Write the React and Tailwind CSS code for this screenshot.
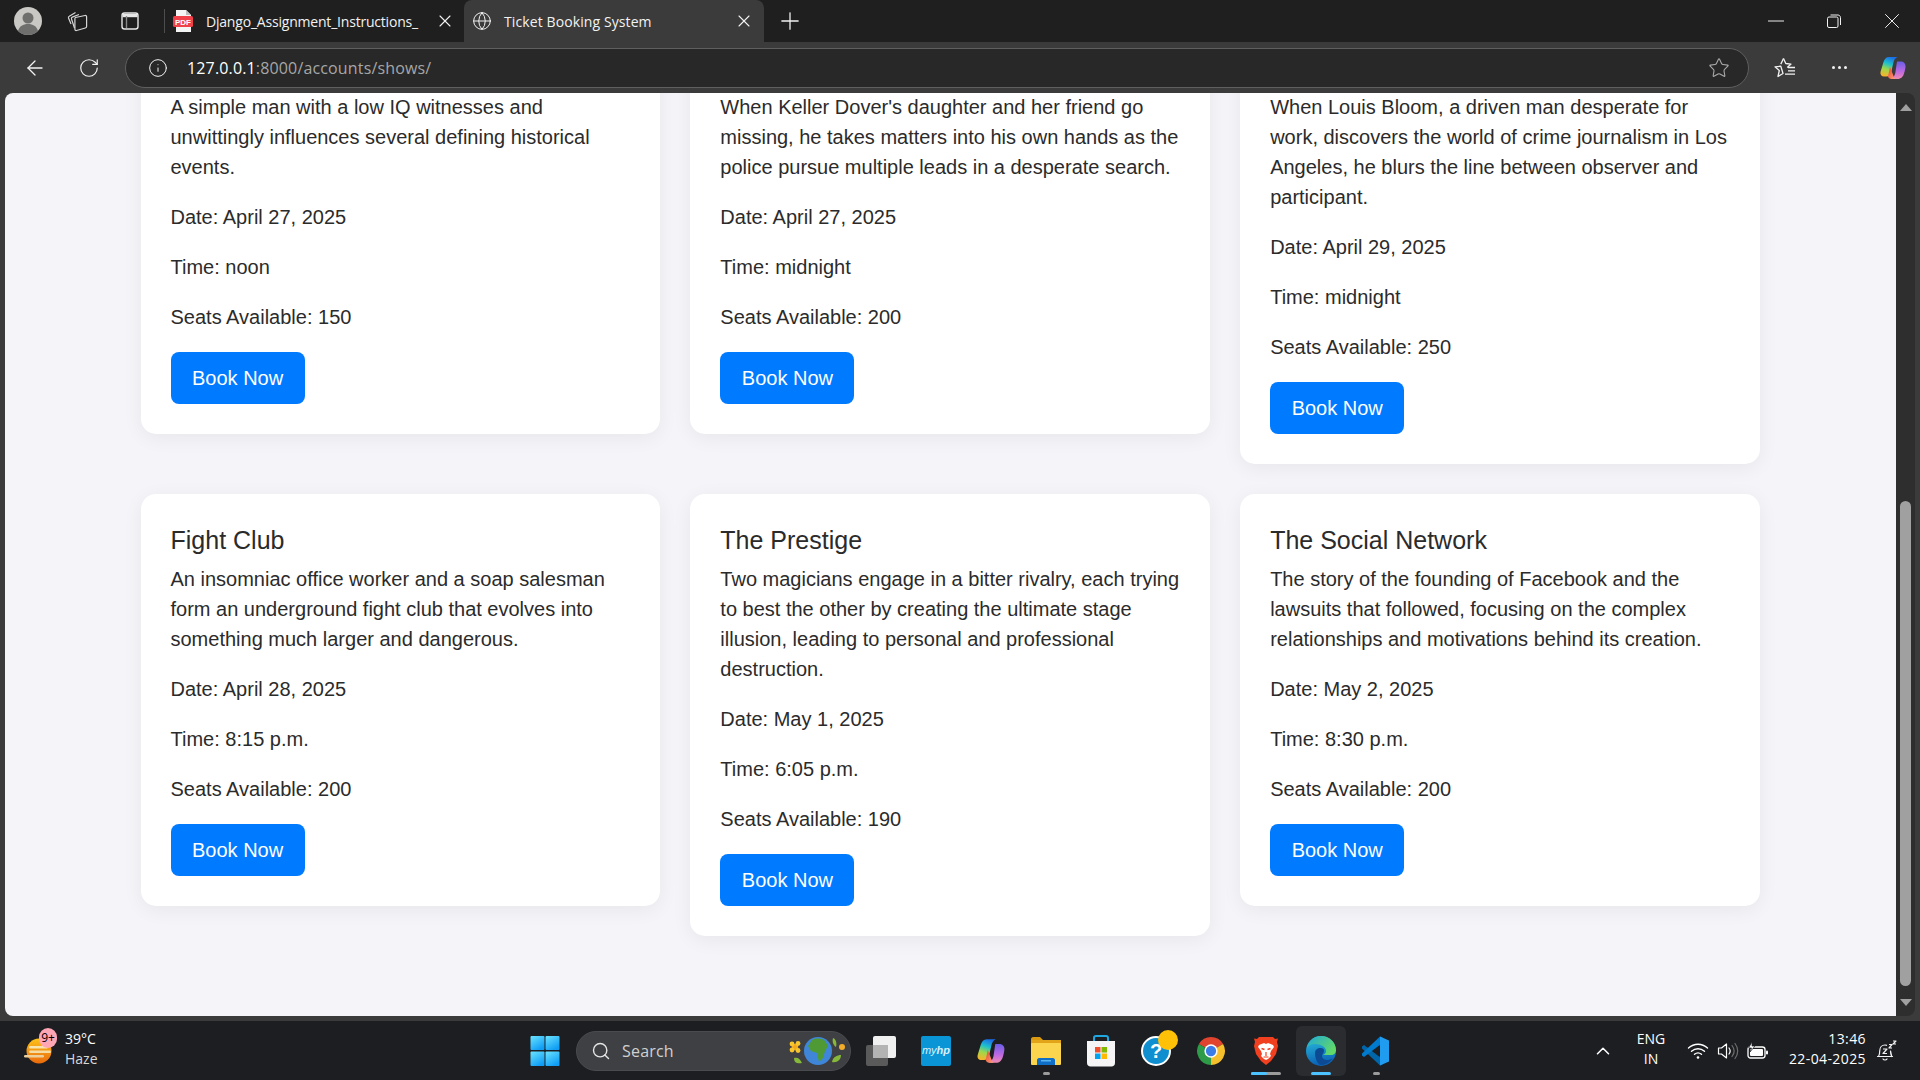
import { ArrowLeft, RotateCw, Info, Star, X, Plus, Minus, Globe, Search, ChevronUp } from 'lucide-react';

// the first row is scrolled so far that its titles are under the browser toolbar
const shows = [
  { id: 1, title: '', text: 'A simple man with a low IQ witnesses and unwittingly influences several defining historical events.', date: 'April 27, 2025', time: 'noon', seats: 150 },
  { id: 2, title: '', text: "When Keller Dover's daughter and her friend go missing, he takes matters into his own hands as the police pursue multiple leads in a desperate search.", date: 'April 27, 2025', time: 'midnight', seats: 200 },
  { id: 3, title: '', text: 'When Louis Bloom, a driven man desperate for work, discovers the world of crime journalism in Los Angeles, he blurs the line between observer and participant.', date: 'April 29, 2025', time: 'midnight', seats: 250 },
  { id: 4, title: 'Fight Club', text: 'An insomniac office worker and a soap salesman form an underground fight club that evolves into something much larger and dangerous.', date: 'April 28, 2025', time: '8:15 p.m.', seats: 200 },
  { id: 5, title: 'The Prestige', text: 'Two magicians engage in a bitter rivalry, each trying to best the other by creating the ultimate stage illusion, leading to personal and professional destruction.', date: 'May 1, 2025', time: '6:05 p.m.', seats: 190 },
  { id: 6, title: 'The Social Network', text: 'The story of the founding of Facebook and the lawsuits that followed, focusing on the complex relationships and motivations behind its creation.', date: 'May 2, 2025', time: '8:30 p.m.', seats: 200 },
];

function ShowCard({ show }) {
  return (
    <div className="self-start rounded-[15px] bg-white p-[30px] text-[20px] leading-[30px] text-[#2b2b2b] shadow-[0_4px_20px_rgba(0,0,0,0.06)]">
      <h3 className="mb-[7.5px] min-h-[32.5px] text-[25px] leading-[32.5px]">{show.title}</h3>
      <p className="mb-5">{show.text}</p>
      <p className="mb-5">Date: {show.date}</p>
      <p className="mb-5">Time: {show.time}</p>
      <p className="mb-5">Seats Available: {show.seats}</p>
      <button className="h-[52px] rounded-lg bg-[#007bff] px-[21.5px] text-white">Book Now</button>
    </div>
  );
}

function PdfIcon() {
  return (
    <svg width="20" height="24" viewBox="0 0 20 24">
      <path d="M3 1h10l5 5v17H3z" fill="#f4f4f4" />
      <path d="M13 1l5 5h-5z" fill="#bdbdbd" />
      <rect x="0" y="7" width="20" height="11" rx="1.500" fill="#f0404a" />
      <text x="10" y="15.500" textAnchor="middle" fontSize="8" fontWeight="700" fill="#fff" fontFamily="Liberation Sans, sans-serif">PDF</text>
    </svg>
  );
}

function CollectionsIcon() {
  return (
    <svg width="22" height="22" viewBox="0 0 22 22" fill="none" stroke="#d6d6d6" strokeWidth="1.200">
      <path d="M9.500 7.500 19 5.500c1-.2 1.600.4 1.600 1.300v9.700c0 .8-.4 1.300-1.200 1.500l-8.900 2.500c-1 .2-1.600-.3-1.600-1.200V8.700c0-.6.200-1 .6-1.200z" />
      <path d="M8.500 18 5.500 9c-.3-.9 0-1.600.8-1.900L13 4.500M5 14 2.500 8c-.3-.9 0-1.500.8-1.800L9.500 2.500" />
    </svg>
  );
}

function TabsIcon() {
  return (
    <svg width="20" height="20" viewBox="0 0 20 20" fill="none" stroke="#e6e6e6" strokeWidth="1.400">
      <rect x="2" y="2" width="16" height="16" rx="2.500" />
      <path d="M2.500 4.500h15" strokeWidth="3.400" />
      <path d="M6.500 5v12" stroke="#8a8a8a" />
    </svg>
  );
}

function Avatar() {
  return (
    <svg width="28" height="28" viewBox="0 0 28 28">
      <circle cx="14" cy="14" r="14" fill="#c9c8c4" />
      <circle cx="14" cy="11" r="5.500" fill="#6f6f6d" />
      <path d="M4 24c1.500-5 5-7 10-7s8.500 2 10 7c-2.500 2.600-6 4-10 4s-7.500-1.400-10-4z" fill="#6f6f6d" />
    </svg>
  );
}

function FavoritesIcon() {
  return (
    <svg width="22" height="22" viewBox="0 0 22 22" fill="none" stroke="#f2f2f2" strokeWidth="1.300" strokeLinejoin="round">
      <path d="M9.500 1.500 11.800 6.500l5.200.6-3.800 3.400M9 16.500 4 19.500l1.300-6L1 9.800l5.800-.6z" />
      <path d="M9.500 1.500 6.800 7.100M14 10.500H21M14 13.800h7M11 17.200h10" />
    </svg>
  );
}

function CopilotIcon({ size = 28, id = 'a' }) {
  return (
    <svg width={size} height={size} viewBox="0 0 28 28">
      <defs>
        <linearGradient id={`copA${id}`} x1="0.600" y1="0" x2="0.300" y2="1">
          <stop offset="0" stopColor="#1b6fe8" />
          <stop offset="0.350" stopColor="#1fc1cc" />
          <stop offset="0.650" stopColor="#9fd84a" />
          <stop offset="1" stopColor="#f7b32c" />
        </linearGradient>
        <linearGradient id={`copB${id}`} x1="0.500" y1="0" x2="0.500" y2="1">
          <stop offset="0" stopColor="#6a5ee8" />
          <stop offset="0.600" stopColor="#c16ae0" />
          <stop offset="1" stopColor="#f08ab0" />
        </linearGradient>
        <linearGradient id={`copC${id}`} x1="0" y1="0" x2="1" y2="1">
          <stop offset="0" stopColor="#f0422c" />
          <stop offset="1" stopColor="#f9a37c" />
        </linearGradient>
      </defs>
      <path d="M10 3h8.500c-2.500 1-3.500 3-4.200 6L12 19c-.6 2.500-2 3.500-4.500 3.500H5c-2.500 0-4-2-3.500-4.500L4.500 8C5.500 5 7 3 10 3z" fill={`url(#copA${id})`} />
      <path d="M18 7.500h4c2.500 0 4.500 2 4.500 4.500 0 2-.6 5-1.500 7.500-.8 3-3 5.500-6.500 5.500h-7c2.800-.6 4-3 4.800-6L18 7.500z" fill={`url(#copB${id})`} />
      <path d="M11 13l3.500 9c.3 1 1 2.300 2 3h-4c-2 0-3-1-3.500-2.500z" fill={`url(#copC${id})`} />
    </svg>
  );
}

function StartIcon() {
  return (
    <svg width="30" height="30" viewBox="0 0 30 30">
      <defs>
        <linearGradient id="win" x1="0" y1="0" x2="0.600" y2="1">
          <stop offset="0" stopColor="#6ce4ff" />
          <stop offset="1" stopColor="#0f9df5" />
        </linearGradient>
      </defs>
      <rect x="0.500" y="0" width="14" height="14" rx="1" fill="url(#win)" />
      <rect x="15.500" y="0" width="14" height="14" rx="1" fill="url(#win)" />
      <rect x="0.500" y="15.500" width="14" height="14.500" rx="1" fill="url(#win)" />
      <rect x="15.500" y="15.500" width="14" height="14.500" rx="1" fill="url(#win)" />
    </svg>
  );
}

function WeatherIcon() {
  return (
    <svg width="30" height="26" viewBox="0 0 30 26">
      <defs>
        <linearGradient id="sun" x1="0" y1="0" x2="0" y2="1">
          <stop offset="0" stopColor="#fcc21b" />
          <stop offset="1" stopColor="#ea6a0c" />
        </linearGradient>
      </defs>
      <circle cx="15" cy="13" r="12.500" fill="url(#sun)" />
      <rect x="5" y="8" width="19" height="2.500" rx="1.250" fill="#f8e4ae" />
      <rect x="5" y="12.500" width="22" height="2.500" rx="1.250" fill="#f5dca4" />
      <rect x="0" y="17" width="20" height="2.500" rx="1.250" fill="#edcf9c" />
    </svg>
  );
}

function EarthIcon() {
  return (
    <svg width="58" height="34" viewBox="0 0 58 34">
      <circle cx="30" cy="17" r="14" fill="#3f86d8" />
      <path d="M24 6c4-2 10-2 13 1l3 5-3 5-2 7-4 4-2-9-6-2-3-5z" fill="#4f9a34" />
      <circle cx="7" cy="13" r="3.200" fill="#f4a81d" />
      <circle cx="4" cy="10" r="2.400" fill="#f7c52e" />
      <circle cx="10" cy="9.500" r="2.400" fill="#f7c52e" />
      <circle cx="4" cy="16" r="2.400" fill="#f7c52e" />
      <circle cx="10" cy="16.500" r="2.400" fill="#f7c52e" />
      <circle cx="54" cy="13" r="3" fill="#f2ad28" />
      <path d="M6 24c3-1 6 0 8 5-4 1-8 0-8-5zM44 28c1-5 5-7 9-7 0 5-4 8-9 7zM45 4c3 1 4 5 3 9-3-2-4-6-3-9z" fill="#86b83a" />
    </svg>
  );
}

function TaskViewIcon() {
  return (
    <svg width="30" height="30" viewBox="0 0 30 30">
      <rect x="0" y="9" width="22" height="21" rx="2" fill="#5a5a5a" />
      <rect x="7" y="0" width="23" height="22" rx="2" fill="#f0f0f0" />
      <rect x="7" y="9" width="15" height="13" fill="#b3b3b3" />
    </svg>
  );
}

function MyHpIcon() {
  return (
    <div className="flex h-[30px] w-[30px] items-center justify-center rounded-[2px] bg-[#0a96d6] font-['Liberation_Sans',sans-serif] text-[11px] leading-none text-[#d8f1fb] italic">
      my<span className="font-bold">hp</span>
    </div>
  );
}

function ExplorerIcon() {
  return (
    <svg width="30" height="28" viewBox="0 0 30 28">
      <path d="M0 2c0-1 1-2 2-2h7l3 3h-12z" fill="#d99a12" />
      <rect x="0" y="3" width="30" height="6" fill="#e2a51a" />
      <rect x="0" y="6" width="30" height="22" rx="1" fill="#fbd54e" />
      <path d="M6 28v-5c0-1 1-2 2-2h14c1 0 2 1 2 2v5z" fill="#0f6fc6" />
      <rect x="10" y="23" width="10" height="1.500" fill="#59b5ef" />
    </svg>
  );
}

function StoreIcon() {
  return (
    <svg width="30" height="32" viewBox="0 0 30 32">
      <path d="M8 7V3c0-1 1-2 2-2h10c1 0 2 1 2 2v4" fill="none" stroke="#1ea7e0" strokeWidth="2" />
      <path d="M1 6h28v22c0 2-1.500 3.500-3.500 3.500h-21C2.500 31.500 1 30 1 28z" fill="#f5f5f5" />
      <rect x="9" y="12" width="5.500" height="5.500" fill="#f2502c" />
      <rect x="15.500" y="12" width="5.500" height="5.500" fill="#7fba00" />
      <rect x="9" y="18.500" width="5.500" height="5.500" fill="#00a4ef" />
      <rect x="15.500" y="18.500" width="5.500" height="5.500" fill="#ffb900" />
    </svg>
  );
}

function HelpIcon() {
  return (
    <div className="relative h-[30px] w-[30px]">
      <div className="flex h-[30px] w-[30px] items-center justify-center rounded-full border-2 border-white bg-[#0f8fd0] font-['Liberation_Sans',sans-serif] text-[20px] leading-none font-bold text-white">?</div>
      <div className="absolute -top-[6px] -right-[7px] h-5 w-5 rounded-full bg-[#ffc107]"></div>
    </div>
  );
}

function ChromeIcon() {
  return (
    <svg width="30" height="30" viewBox="0 0 28 28">
      <path d="M14 14 2.740 7.500A13 13 0 0 1 25.260 7.500Z" fill="#e0442f" />
      <path d="M14 14 25.260 7.500A13 13 0 0 1 14 27Z" fill="#f6c02d" />
      <path d="M14 14 14 27A13 13 0 0 1 2.740 7.500Z" fill="#2e9b48" />
      <circle cx="14" cy="14" r="6.200" fill="#fff" />
      <circle cx="14" cy="14" r="4.800" fill="#3b7ce6" />
    </svg>
  );
}

function BraveIcon() {
  return (
    <svg width="26" height="30" viewBox="0 0 26 30">
      <path d="M6 1h14l2 2 3-.5L24 6l1 4-2 8-5 7-5 4-5-4-5-7-2-8 1-4-1-3.500L4 3z" fill="#f1401f" />
      <path d="M6 9l5-2 2 1 2-1 5 2 1 2-3 4-1 3 1 2-3 3-2 1-2-1-3-3 1-2-1-3-3-4z" fill="#fff" />
      <path d="M8.500 12.500l3 1M17.500 12.500l-3 1" stroke="#f1401f" strokeWidth="1.500" />
      <path d="M13 16v4M10.500 21h5" stroke="#f1401f" strokeWidth="1.200" />
    </svg>
  );
}

function EdgeIcon() {
  return (
    <svg width="30" height="30" viewBox="0 0 30 30">
      <defs>
        <linearGradient id="edgeA" x1="0" y1="0" x2="0.200" y2="1">
          <stop offset="0" stopColor="#2bc3e0" />
          <stop offset="1" stopColor="#0b62b4" />
        </linearGradient>
        <linearGradient id="edgeB" x1="0" y1="0" x2="1" y2="0.600">
          <stop offset="0" stopColor="#1fa8d8" />
          <stop offset="1" stopColor="#62d968" />
        </linearGradient>
      </defs>
      <circle cx="15" cy="15" r="15" fill="url(#edgeA)" />
      <path d="M15 0c8 0 15 6 15 14 0 3-2 5-5 5h-8c2-1 3-2 3-4 0-4-5-7-11-7C5 8 2 10 1 12 2 5 8 0 15 0z" fill="url(#edgeB)" />
      <path d="M9 17c0-3 2-5 6-5 2 0 3 1 3 3s-2 3-2 5 2 4 5 4c2 0 4-.5 6-2-3 4-7 7-12 7-4-1-6-7-6-12z" fill="#0c4a94" />
    </svg>
  );
}

function VsCodeIcon() {
  return (
    <svg width="30" height="30" viewBox="0 0 30 30">
      <path d="M1 10.500 3 9l19 14.500V28l-3 1.500L1 12.500z" fill="#0065a9" />
      <path d="M1 19.500 3 21 22 6.500V2L19 .500 1 17.500z" fill="#007acc" />
      <path d="M19 .500 28 4.500v21l-9 4z" fill="#1f9cf0" />
    </svg>
  );
}

function WifiIcon() {
  return (
    <svg width="22" height="18" viewBox="0 0 22 18" fill="none" stroke="#fff" strokeWidth="1.400" strokeLinecap="round">
      <path d="M1.500 6c5.500-5 13.500-5 19 0M4.500 9.200c3.800-3.300 9.200-3.300 13 0M7.500 12.300c2.100-1.700 4.900-1.700 7 0" />
      <circle cx="11" cy="15.500" r="1.300" fill="#fff" stroke="none" />
    </svg>
  );
}

function VolumeIcon() {
  return (
    <svg width="22" height="18" viewBox="0 0 22 18" fill="none" stroke="#fff" strokeWidth="1.200">
      <path d="M1.500 6h3l5-4v14l-5-4h-3z" strokeLinejoin="round" />
      <path d="M12 6c1.400 1.800 1.400 4.200 0 6" strokeLinecap="round" />
      <path d="M15 3.500c2.600 3.300 2.600 7.700 0 11M18 1.500c3.600 4.500 3.600 10.500 0 15" stroke="#6f6f6f" strokeLinecap="round" />
    </svg>
  );
}

function BatteryIcon() {
  return (
    <svg width="22" height="18" viewBox="0 0 22 18">
      <rect x="1" y="5" width="17" height="11" rx="2.500" fill="none" stroke="#fff" strokeWidth="1.300" />
      <rect x="3" y="7" width="13" height="7" rx="1" fill="#fff" />
      <rect x="19" y="8.500" width="2" height="4" rx="1" fill="#fff" />
      <path d="M5 0 1.500 6h3L3 10l5-6H5z" fill="#fff" stroke="#1d1f22" strokeWidth="0.700" />
    </svg>
  );
}

function BellIcon() {
  return (
    <svg width="22" height="22" viewBox="0 0 22 22" fill="none" stroke="#f2f2f2" strokeWidth="1.200" strokeLinejoin="round">
      <path d="M3.500 16.500c1-1.500 1.200-3 1.200-5.500 0-3.500 2.300-6 5.300-6 1 0 1.500.2 2 .4M15.500 11c0 2.500.2 4 1.200 5.500z" />
      <path d="M2.500 16.500h15M8 19c.8 1.300 3.200 1.300 4 0" strokeLinecap="round" />
      <path d="M8 9h4l-4 4.500h4" />
      <path d="M14 4.500h3l-3 3.500h3M18 1h3l-3 3h3" />
    </svg>
  );
}

function TaskbarItem({ children, active, bar }) {
  return (
    <div className="relative flex h-[50px] w-[55px] items-center justify-center">
      {active && <div className="absolute inset-y-0 left-[2px] w-[50px] rounded-md bg-[#2a2c30]"></div>}
      <div className="relative flex items-center justify-center">{children}</div>
      {bar === 'dot' && <div className="absolute bottom-[1px] h-[3px] w-[7px] rounded-full bg-[#9b9b9b]"></div>}
      {bar === 'split' && (
        <div className="absolute bottom-[1px] flex h-[3px] w-[30px] rounded-full bg-[#9b9b9b]">
          <div className="h-[3px] w-[16px] rounded-full bg-[#4cc2ff]"></div>
        </div>
      )}
      {bar === 'active' && <div className="absolute bottom-[1px] h-[3px] w-[20px] rounded-full bg-[#4cc2ff]"></div>}
    </div>
  );
}

export default function App() {
  return (
    <div className="flex h-screen w-[1920px] flex-col overflow-hidden bg-[#3b3b3b] font-['Open_Sans',sans-serif]">
      {/* tab strip */}
      <div className="flex h-[42px] shrink-0 items-center bg-[#1f1f1f] text-[14px] text-[#f2f2f2]">
        <div className="ml-[14px] flex w-[28px] justify-center"><Avatar /></div>
        <div className="ml-[24px] flex w-[22px] justify-center"><CollectionsIcon /></div>
        <div className="ml-[31px] flex w-[22px] justify-center"><TabsIcon /></div>
        <div className="ml-[23px] h-[24px] w-px bg-[#4d4d4d]"></div>
        <div className="ml-[8px] flex w-[20px] justify-center"><PdfIcon /></div>
        <div className="ml-[13px] w-[221px] tracking-[-0.2px] whitespace-nowrap">Django_Assignment_Instructions_</div>
        <X className="ml-[8px] shrink-0" size={20} strokeWidth={1.300} />
        <div className="ml-[9px] flex h-[42px] w-[300px] items-center rounded-t-lg bg-[#3b3b3b] pl-[8px]">
          <Globe size={20} strokeWidth={1.200} />
          <span className="ml-[12px] w-[230px] tracking-[0.1px] whitespace-nowrap">Ticket Booking System</span>
          <X size={20} strokeWidth={1.300} />
        </div>
        <Plus className="ml-[12px]" size={28} strokeWidth={1.100} />
        <div className="ml-auto flex items-center text-[#f2f2f2]">
          <Minus size={26} strokeWidth={0.900} />
          <svg className="ml-[38px]" width="14" height="14" viewBox="0 0 14 14" fill="none" stroke="#f2f2f2" strokeWidth="1">
            <rect x="0.500" y="3" width="10.500" height="10.500" rx="1.500" />
            <path d="M3.500 1h7.500c1.200 0 2.500 1.200 2.500 2.500V11" />
          </svg>
          <X className="mr-[15px] ml-[38px]" size={26} strokeWidth={0.900} />
        </div>
      </div>

      {/* toolbar */}
      <div className="flex h-[51px] shrink-0 items-center bg-[#3b3b3b] text-[#f2f2f2]">
        <ArrowLeft className="ml-[23px]" size={24} strokeWidth={1.300} />
        <RotateCw className="ml-[31px]" size={22} strokeWidth={1.300} />
        <div className="ml-[25px] flex h-[40px] w-[1624px] items-center rounded-full border border-[#5f5f5f] bg-[#282828] pr-[18px] pl-[22px]">
          <Info size={20} strokeWidth={1.200} />
          <div className="ml-[19px] text-[16px] tracking-[0.15px]">
            <span className="text-white">127.0.0.1</span><span className="text-[#a6a6a6]">:8000/accounts/shows/</span>
          </div>
          <Star className="ml-auto text-[#a9a9a9]" size={22} strokeWidth={1.200} />
        </div>
        <div className="ml-[25px]"><FavoritesIcon /></div>
        <div className="ml-[33px] flex w-[20px] justify-center gap-[3px]">
          <span className="h-[3px] w-[3px] rounded-full bg-[#f2f2f2]"></span>
          <span className="h-[3px] w-[3px] rounded-full bg-[#f2f2f2]"></span>
          <span className="h-[3px] w-[3px] rounded-full bg-[#f2f2f2]"></span>
        </div>
        <div className="ml-[30px]"><CopilotIcon id="top" /></div>
      </div>

      {/* page + scrollbar */}
      <div className="flex h-[923px] shrink-0 pl-[5px]">
        <div className="w-[1891px] overflow-hidden rounded-tl-lg rounded-bl-lg bg-[#f4f4f9] pr-[136px] pl-[135.500px] font-['Liberation_Sans',sans-serif]">
          <div className="-mt-[71px] grid grid-cols-3 gap-[30px]">
            {shows.map((show) => (
              <ShowCard key={show.id} show={show} />
            ))}
          </div>
        </div>
        <div className="flex w-[19px] flex-col items-center rounded-r-lg bg-[#2e2e2e] pt-[11px] pb-[10px]">
          <div className="h-0 w-0 border-x-[6px] border-b-[7px] border-x-transparent border-b-[#a0a0a0]"></div>
          <div className="mt-[390px] h-[485px] w-[11px] rounded-full bg-[#a0a0a0]"></div>
          <div className="mt-auto h-0 w-0 border-x-[6px] border-t-[7px] border-x-transparent border-t-[#a0a0a0]"></div>
        </div>
      </div>

      {/* taskbar */}
      <div className="mt-[5px] flex h-[59px] shrink-0 items-center bg-[#1c1e21] text-white">
        <div className="flex w-[530px] shrink-0 items-center pl-[24px]">
          <div className="relative">
            <WeatherIcon />
            <div className="absolute -top-[10px] left-[15px] flex h-[20px] w-[18px] items-center justify-center rounded-full bg-[#ffa6b5] text-[12px] text-black">9+</div>
          </div>
          <div className="-mt-[3px] ml-[11px] text-[14px] leading-[20px]">
            <div>39°C</div>
            <div className="text-[#d8d8d8]">Haze</div>
          </div>
        </div>
        <StartIcon />
        <div className="mr-[2.500px] ml-[16px] flex h-[40px] w-[275px] items-center rounded-full border border-[#4a4b4e] bg-[#3f4043] pl-[14px] text-[16px] tracking-[0.2px] text-[#d0d0d0]">
          <Search size={20} strokeWidth={1.700} className="text-[#e4e4e4]" />
          <span className="ml-[11px]">Search</span>
          <div className="mr-[4px] ml-auto flex"><EarthIcon /></div>
        </div>
        <TaskbarItem><TaskViewIcon /></TaskbarItem>
        <TaskbarItem><MyHpIcon /></TaskbarItem>
        <TaskbarItem><CopilotIcon size={30} id="bar" /></TaskbarItem>
        <TaskbarItem bar="dot"><ExplorerIcon /></TaskbarItem>
        <TaskbarItem><StoreIcon /></TaskbarItem>
        <TaskbarItem><HelpIcon /></TaskbarItem>
        <TaskbarItem><ChromeIcon /></TaskbarItem>
        <TaskbarItem bar="split"><BraveIcon /></TaskbarItem>
        <TaskbarItem active bar="active"><EdgeIcon /></TaskbarItem>
        <TaskbarItem bar="dot"><VsCodeIcon /></TaskbarItem>

        <div className="ml-auto flex items-center">
          <div className="flex w-[30px] justify-center"><ChevronUp size={22} strokeWidth={1.700} /></div>
          <div className="-mt-[3px] ml-[9px] w-[48px] text-center text-[14px] leading-[20px]">
            <div>ENG</div>
            <div>IN</div>
          </div>
          <div className="ml-[8px] flex w-[30px] justify-center"><WifiIcon /></div>
          <div className="flex w-[30px] justify-center"><VolumeIcon /></div>
          <div className="flex w-[30px] justify-center"><BatteryIcon /></div>
          <div className="-mt-[3px] w-[93px] text-right text-[14px] leading-[20px] tracking-[0.4px]">
            <div>13:46</div>
            <div>22-04-2025</div>
          </div>
          <div className="mr-[19px] ml-[5px] flex w-[30px] justify-center"><BellIcon /></div>
        </div>
      </div>
    </div>
  );
}
